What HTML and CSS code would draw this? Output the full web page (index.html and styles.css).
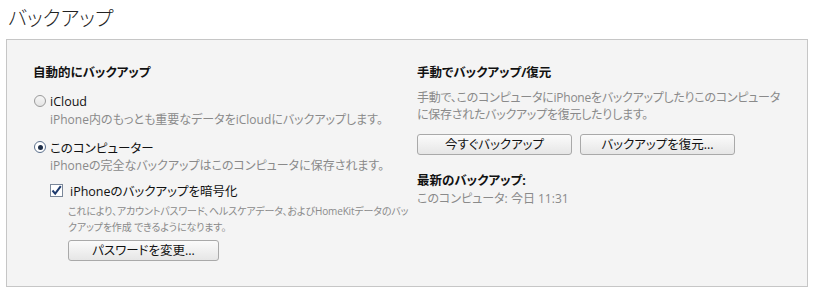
FILE: index.html
```html
<!DOCTYPE html>
<html lang="ja">
<head>
<meta charset="utf-8">
<link rel="stylesheet" href="styles.css">
</head>
<body>
<h1 class="title">バックアップ</h1>
<div class="panel">
  <div class="col left">
    <div class="heading">自動的にバックアップ</div>
    <div class="option opt-first">
      <span class="radio"></span><span class="label">iCloud</span>
    </div>
    <div class="desc">iPhone内のもっとも重要なデータをiCloudにバックアップします。</div>
    <div class="option">
      <span class="radio checked"></span><span class="label">このコンピューター</span>
    </div>
    <div class="desc">iPhoneの完全なバックアップはこのコンピュータに保存されます。</div>
    <div class="check-row">
      <span class="checkbox"><svg width="13" height="13" viewBox="0 0 13 13"><path d="M2.5 6.5 L5.2 9.6 L10.8 2.2" fill="none" stroke="#1f3b6e" stroke-width="2"/></svg></span>
      <span class="label">iPhoneのバックアップを暗号化</span>
    </div>
    <div class="small">これにより、アカウントパスワード、ヘルスケアデータ、およびHomeKitデータのバッ<br>クアップを作成 できるようになります。</div>
    <button class="btn btn-pass">パスワードを変更...</button>
  </div>
  <div class="col right">
    <div class="heading">手動でバックアップ/復元</div>
    <div class="desc desc-right">手動で、このコンピュータにiPhoneをバックアップしたりこのコンピュータ<br>に保存されたバックアップを復元したりします。</div>
    <div class="btn-row">
      <button class="btn btn-wide">今すぐバックアップ</button>
      <button class="btn btn-wide">バックアップを復元...</button>
    </div>
    <div class="heading latest">最新のバックアップ:</div>
    <div class="desc">このコンピュータ: 今日 11:31</div>
  </div>
</div>
</body>
</html>
```

FILE: styles.css
```css
* { box-sizing: border-box; }
body {
  margin: 0;
  background: #ffffff;
  font-family: "Open Sans", "Noto Sans CJK JP", sans-serif;
  font-feature-settings: "palt";
  color: #1c1c1c;
  width: 817px;
  height: 297px;
  overflow: hidden;
  white-space: nowrap;
}
.title {
  margin: 0;
  padding: 7px 8px 0;
  font-size: 20px;
  line-height: 24px;
  font-weight: 300;
  color: #222;
}
.panel {
  margin: 8px 0 0 6px;
  width: 802px;
  height: 248px;
  border: 1px solid #c6c6c6;
  background: #f4f4f4;
  padding: 23px 0 0 26px;
  display: grid;
  grid-template-columns: 384px 1fr;
}
.col { display: flex; flex-direction: column; align-items: flex-start; }
.heading {
  font-size: 12.5px;
  line-height: 20px;
  font-weight: 700;
  color: #111;
}
.option {
  display: flex;
  align-items: center;
  height: 20px;
  margin-top: 8px;
}
.radio {
  width: 12px;
  height: 12px;
  border-radius: 50%;
  border: 1px solid #9a9a9a;
  background: linear-gradient(#f6f6f6, #e4e4e4);
  margin: 0 4px 0 1px;
  position: relative;
}
.radio.checked { border-color: #5a6f8c; background: #fff; }
.radio.checked::after {
  content: "";
  position: absolute;
  left: 2.5px; top: 2.5px;
  width: 5px; height: 5px;
  border-radius: 50%;
  background: #1f2f48;
}
.label { font-size: 12.5px; color: #111; }
.desc {
  font-size: 12px;
  line-height: 18px;
  color: #8a8a8a;
  padding-left: 17px;
}
.check-row {
  display: flex;
  align-items: center;
  height: 20px;
  margin-top: 5px;
  padding-left: 17px;
}
.checkbox {
  width: 13px;
  height: 13px;
  border: 1px solid #7a8799;
  background: #fff;
  margin-right: 7px;
  display: flex;
}
.checkbox svg { margin: -1px; }
.small {
  margin-top: 3px;
  padding-left: 35px;
  font-size: 10px;
  line-height: 16px;
  color: #8a8a8a;
  letter-spacing: -0.15px;
}
.btn {
  font-family: "Open Sans", "Noto Sans CJK JP", sans-serif;
  font-feature-settings: "palt";
  font-size: 12.5px;
  color: #111;
  height: 21px;
  line-height: 17px;
  padding: 0;
  border: 1px solid #a9a9a9;
  border-radius: 3px;
  background: linear-gradient(#fbfbfb, #e6e6e6);
}
.btn-pass { margin: 5px 0 0 35px; width: 151px; }
.desc-right { padding-left: 0; line-height: 17px; margin-top: 6px; letter-spacing: -0.25px; }
.btn-row { display: flex; gap: 8px; margin-top: 11px; }
.btn-wide { width: 155px; }
.latest { margin-top: 17px; line-height: 18px; }
.right .desc { padding-left: 0; }
```
